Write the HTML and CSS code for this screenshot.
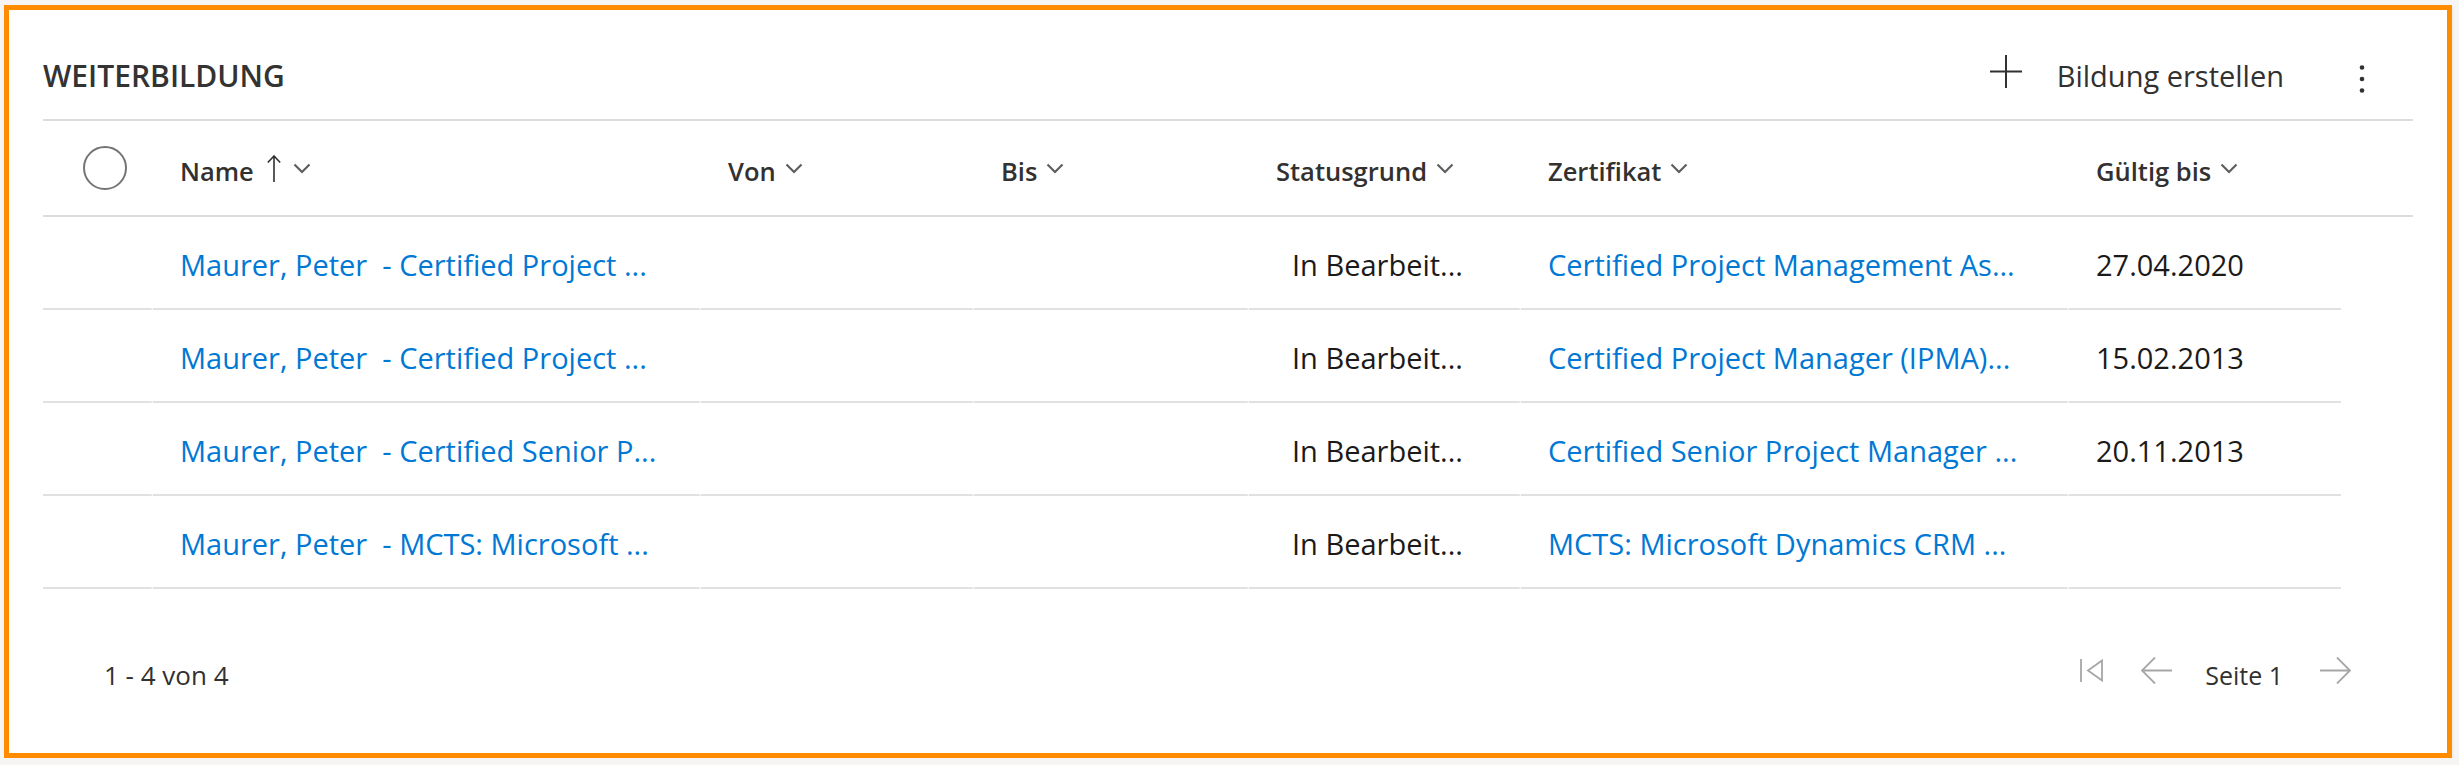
FILE: index.html
```html
<!DOCTYPE html>
<html lang="de">
<head>
    <meta charset="UTF-8">
    <meta name="viewport" content="width=device-width, initial-scale=1.0">
    <title>Weiterbildung</title>
    <link rel="stylesheet" href="styles.css">
</head>
<body>
    <div class="card">
        <div class="card-head">
            <h2 class="card-title">WEITERBILDUNG</h2>
            <div class="commands">
                <button class="cmd-new" type="button">
                    <svg class="icon-plus" width="32" height="33" viewBox="0 0 32 33"><path d="M16 0 V33 M0 16.5 H32" /></svg>
                    <span>Bildung erstellen</span>
                </button>
                <button class="cmd-more" type="button" title="Weitere Befehle">
                    <svg width="6" height="30" viewBox="0 0 6 30"><circle cx="3" cy="3.5" r="2.3" /><circle cx="3" cy="15" r="2.3" /><circle cx="3" cy="26.5" r="2.3" /></svg>
                </button>
            </div>
        </div>

        <div class="grid">
            <div class="grid-header">
                <div class="cell cell-check"><span class="check"></span></div>
                <div class="cell">Name
                    <svg class="sort-up" width="14" height="27" viewBox="0 0 14 27"><path d="M7 1 V27 M0.8 7.5 L7 1 L13.2 7.5" /></svg>
                    <svg class="chevron chevron-after-sort" width="18" height="11" viewBox="0 0 18 11"><path d="M1.5 1.5 L9 9 L16.5 1.5" /></svg>
                </div>
                <div class="cell">Von <svg class="chevron" width="18" height="11" viewBox="0 0 18 11"><path d="M1.5 1.5 L9 9 L16.5 1.5" /></svg></div>
                <div class="cell">Bis <svg class="chevron" width="18" height="11" viewBox="0 0 18 11"><path d="M1.5 1.5 L9 9 L16.5 1.5" /></svg></div>
                <div class="cell">Statusgrund <svg class="chevron" width="18" height="11" viewBox="0 0 18 11"><path d="M1.5 1.5 L9 9 L16.5 1.5" /></svg></div>
                <div class="cell">Zertifikat <svg class="chevron" width="18" height="11" viewBox="0 0 18 11"><path d="M1.5 1.5 L9 9 L16.5 1.5" /></svg></div>
                <div class="cell">Gültig bis <svg class="chevron" width="18" height="11" viewBox="0 0 18 11"><path d="M1.5 1.5 L9 9 L16.5 1.5" /></svg></div>
            </div>

            <div class="grid-row">
                <div class="cell cell-check"></div>
                <div class="cell"><a href="#">Maurer, Peter&nbsp; - Certified Project ...</a></div>
                <div class="cell"></div>
                <div class="cell"></div>
                <div class="cell cell-status">In Bearbeit...</div>
                <div class="cell"><a href="#">Certified Project Management As...</a></div>
                <div class="cell">27.04.2020</div>
            </div>
            <div class="grid-row">
                <div class="cell cell-check"></div>
                <div class="cell"><a href="#">Maurer, Peter&nbsp; - Certified Project ...</a></div>
                <div class="cell"></div>
                <div class="cell"></div>
                <div class="cell cell-status">In Bearbeit...</div>
                <div class="cell"><a href="#">Certified Project Manager (IPMA)...</a></div>
                <div class="cell">15.02.2013</div>
            </div>
            <div class="grid-row">
                <div class="cell cell-check"></div>
                <div class="cell"><a href="#">Maurer, Peter&nbsp; - Certified Senior P...</a></div>
                <div class="cell"></div>
                <div class="cell"></div>
                <div class="cell cell-status">In Bearbeit...</div>
                <div class="cell"><a href="#">Certified Senior Project Manager ...</a></div>
                <div class="cell">20.11.2013</div>
            </div>
            <div class="grid-row">
                <div class="cell cell-check"></div>
                <div class="cell"><a href="#">Maurer, Peter&nbsp; - MCTS: Microsoft ...</a></div>
                <div class="cell"></div>
                <div class="cell"></div>
                <div class="cell cell-status">In Bearbeit...</div>
                <div class="cell"><a href="#">MCTS: Microsoft Dynamics CRM ...</a></div>
                <div class="cell"></div>
            </div>
        </div>

        <div class="card-foot">
            <span class="count">1 - 4 von 4</span>
            <div class="pager">
                <svg class="pager-icon" width="23" height="23" viewBox="0 0 23 23"><path d="M1 0 V23 M22 1.5 L8 11.5 L22 21.5 Z" /></svg>
                <svg class="pager-icon pager-prev" width="31" height="27" viewBox="0 0 31 27"><path d="M31 13.5 H1 M14 0.5 L1 13.5 L14 26.5" /></svg>
                <span class="page-label">Seite 1</span>
                <svg class="pager-icon pager-next" width="31" height="27" viewBox="0 0 31 27"><path d="M0 13.5 H30 M17 0.5 L30 13.5 L17 26.5" /></svg>
            </div>
        </div>
    </div>
</body>
</html>
```

FILE: styles.css
```css
* {
    box-sizing: border-box;
}

body {
    margin: 5px 0 0 4px;
    background-color: #f6f5f4;
    font-family: "Open Sans", "Noto Sans", "Liberation Sans", sans-serif;
    color: #323130;
}

.card {
    width: 2448px;
    height: 753px;
    border: 5px solid #ff8c00;
    background-color: #fff;
    padding: 0 34px;
    box-shadow: 0 2px 4px rgba(0, 0, 0, 0.08);
}

/* title bar */
.card-head {
    height: 111px;
    padding-top: 22px;
    display: flex;
    align-items: center;
    border-bottom: 2px solid #dcdcdc;
}

.card-title {
    margin: 0;
    font-size: 30px;
    font-weight: 600;
    line-height: 40px;
    color: #333;
}

.commands {
    margin-left: auto;
    display: flex;
    align-items: center;
    padding-right: 29px;
}

.cmd-new,
.cmd-more {
    background: none;
    border: none;
    padding: 0;
    font: inherit;
    color: inherit;
    cursor: pointer;
    display: flex;
    align-items: center;
}

.cmd-new {
    font-size: 29px;
    line-height: 40px;
    color: #323130;
}

.icon-plus {
    margin-right: 35px;
    margin-bottom: 8px;
    stroke: #323130;
    stroke-width: 2;
    fill: none;
}

.cmd-more {
    width: 44px;
    justify-content: center;
    margin-left: 56px;
    margin-top: 6px;
}

.cmd-more svg {
    fill: #323130;
}

/* grid */
.grid-header,
.grid-row {
    display: grid;
    grid-template-columns: 110px 548px 273px 275px 272px 548px 272px;
}

.grid-header {
    height: 96px;
    padding-top: 5px;
    border-bottom: 2px solid #dcdcdc;
    font-size: 25.5px;
    font-weight: 600;
    color: #323130;
}

.grid-header .cell {
    display: flex;
    align-items: center;
    padding-left: 27px;
    white-space: nowrap;
}

.grid-header .cell-check {
    padding-left: 40px;
}

.check {
    width: 44px;
    height: 44px;
    border: 2px solid #747474;
    border-radius: 50%;
    margin-bottom: 5px;
}

.sort-up {
    margin-left: 13px;
    margin-bottom: 4px;
    stroke: #323130;
    stroke-width: 1.6;
    fill: none;
}

.chevron {
    margin-left: 9px;
    margin-bottom: 4px;
    stroke: #605e5c;
    stroke-width: 2.2;
    fill: none;
}

.chevron-after-sort {
    margin-left: 12px;
}

.grid-row {
    height: 93px;
    font-size: 29px;
    color: #1b1a19;
}

.grid-row .cell {
    display: flex;
    align-items: center;
    padding: 4px 0 0 27px;
    border-bottom: 2px solid #e1e1e1;
    border-right: 2px solid #fff;
    white-space: nowrap;
    overflow: hidden;
}

.grid-row .cell:last-child {
    border-right: none;
}

.grid-row .cell-status {
    padding-left: 43px;
}

.grid-row a {
    color: #0078d4;
    text-decoration: none;
}

/* footer */
.card-foot {
    margin-top: 66px;
    height: 40px;
    display: flex;
    align-items: center;
    justify-content: space-between;
    padding: 0 62px 0 61px;
    font-size: 26px;
    color: #323130;
}

.pager {
    display: flex;
    align-items: center;
}

.page-label {
    font-size: 25px;
    margin: 0 37px 0 33px;
}

.pager-icon {
    margin-bottom: 9px;
    stroke: #a6a6a6;
    stroke-width: 1.8;
    fill: none;
}

.pager-prev {
    margin-left: 38px;
}
```
